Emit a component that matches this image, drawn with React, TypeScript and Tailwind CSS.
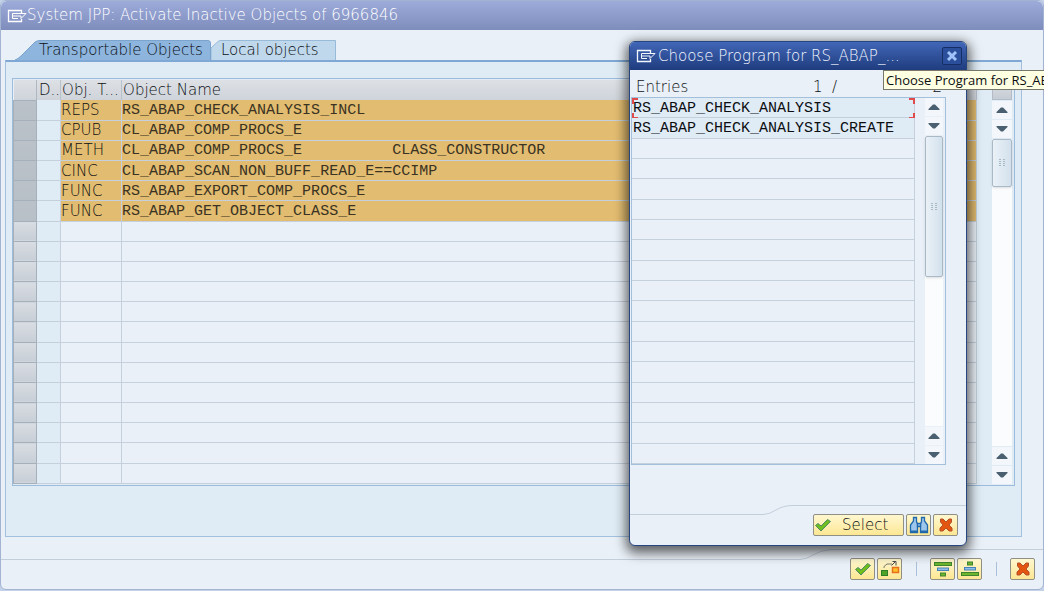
import { clsx } from "clsx";
import type { ReactNode } from "react";

const objects = [
  { type: "REPS", name: "RS_ABAP_CHECK_ANALYSIS_INCL" },
  { type: "CPUB", name: "CL_ABAP_COMP_PROCS_E" },
  { type: "METH", name: "CL_ABAP_COMP_PROCS_E          CLASS_CONSTRUCTOR" },
  { type: "CINC", name: "CL_ABAP_SCAN_NON_BUFF_READ_E==CCIMP" },
  { type: "FUNC", name: "RS_ABAP_EXPORT_COMP_PROCS_E" },
  { type: "FUNC", name: "RS_ABAP_GET_OBJECT_CLASS_E" },
];

const programs = ["RS_ABAP_CHECK_ANALYSIS", "RS_ABAP_CHECK_ANALYSIS_CREATE"];

const objectRows = Array.from({ length: 19 }, (_, i) => objects[i]);
const programRows = Array.from({ length: 18 }, (_, i) => programs[i]);

function WindowIcon() {
  return (
    <svg width="20" height="14" viewBox="0 0 20 14" fill="none" stroke="currentColor" className="shrink-0">
      <path d="M14.500 4V1.500H1.500v11h13V10" strokeWidth="1.300" />
      <path d="M10 4.500H5.500v5H11M6 7h5" />
      <path d="M10 4.500h9L14 9.500V7h-3" />
    </svg>
  );
}

function CheckIcon() {
  return (
    <svg width="18" height="16" viewBox="0 0 18 16" className="shrink-0">
      <path d="M1.500 8.500l2.500-2 3 2.500 6.500-6.500 3 2L7 14z" fill="#6fbe1e" stroke="#4d8a6a" strokeLinejoin="round" />
    </svg>
  );
}

function CrossIcon() {
  return (
    <svg width="16" height="16" viewBox="0 0 16 16">
      <path
        d="M2.500 2H5l3 3 3-3h2.500v3L11 8l3 3v3h-3l-3-3-3 3H2v-3l3-3-2.500-3z"
        fill="#e2560f"
        stroke="#b5502f"
        strokeLinejoin="round"
      />
    </svg>
  );
}

function BinocularsIcon() {
  return (
    <svg width="20" height="18" viewBox="0 0 20 18" fill="#9cc6ec" stroke="#2068ac" strokeWidth="1.300">
      <path d="M4.500 1.500h3v4L8.500 8v8.500h-7V9l3-4z" />
      <path d="M15.500 1.500h-3v4L11.500 8v8.500h7V9l-3-4z" />
      <path d="M8.500 7.500h3v3h-3z" />
      <path d="M2 15.500h6M12 15.500h6" strokeWidth="2" />
    </svg>
  );
}

function TransferIcon() {
  return (
    <svg width="20" height="18" viewBox="0 0 20 18" fill="none">
      <path d="M4 8V6.500L7 4h5" stroke="#777a70" />
      <path d="M11.500 5.500l4-4M12.500 1.500h3.500v4" stroke="#4a4d50" />
      <rect x="1.500" y="10.500" width="6" height="5" fill="#4fa428" stroke="#2e7d28" />
      <rect x="12.500" y="7.500" width="6" height="5" fill="#ffc02c" stroke="#e8701a" strokeWidth="1.500" />
    </svg>
  );
}

function ExpandIcon({ flipped = false }: { flipped?: boolean }) {
  return (
    <svg width="20" height="18" viewBox="0 0 20 18" className={clsx(flipped && "rotate-180")}>
      <rect x="1.500" y="2.500" width="17" height="3" fill="#6cb52d" stroke="#3f8430" />
      <rect x="4.500" y="8" width="11" height="2.500" fill="#8fc0ea" stroke="#4482b8" />
      <rect x="7.500" y="13" width="5" height="3" fill="#6cb52d" stroke="#3f8430" />
    </svg>
  );
}

function ToolButton({ label, children }: { label: string; children: ReactNode }) {
  return (
    <button
      aria-label={label}
      className="flex h-[22px] w-[25px] items-center justify-center rounded-xs border border-[#8f8f86] bg-linear-to-b from-[#fff7cf] to-[#fde793]"
    >
      {children}
    </button>
  );
}

function ScrollButton({ label, down = false }: { label: string; down?: boolean }) {
  return (
    <button aria-label={label} className="flex h-[18px] w-full shrink-0 items-center justify-center bg-[#f3f7fb]">
      <svg width="12" height="6" viewBox="0 0 12 6" className={clsx(down && "rotate-180")}>
        <path d="M0.500 6V5L5 0.500h2L11.500 5v1z" fill="#4a6070" />
      </svg>
    </button>
  );
}

function Scrollbar({ thumb }: { thumb: string }) {
  return (
    <div className="flex flex-1 flex-col gap-px">
      <ScrollButton label="Scroll up" />
      <ScrollButton label="Scroll down" down />
      <div className="flex-1 bg-[#fbfcfd]">
        <div
          className={clsx(
            "flex items-center justify-center rounded-xs border border-[#aab9c6] bg-linear-to-r from-[#eaf1f7] to-[#d3e1ed] shadow-sm",
            thumb,
          )}
        >
          <svg width="6" height="8" viewBox="0 0 6 8" fill="#a9b8c5">
            <path d="M0 0h2v1H0zM0 2h2v1H0zM0 4h2v1H0zM0 6h2v1H0zM4 0h2v1H4zM4 2h2v1H4zM4 4h2v1H4zM4 6h2v1H4z" />
          </svg>
        </div>
      </div>
      <ScrollButton label="Page up" />
      <ScrollButton label="Page down" down />
    </div>
  );
}

function Tabs() {
  return (
    <div role="tablist" className="flex h-5 pl-2.5">
      <button role="tab" aria-selected="true" className="relative w-[196px] pl-6 text-left leading-5 whitespace-nowrap">
        <svg viewBox="0 0 196 20" preserveAspectRatio="none" className="absolute inset-0 h-full w-full">
          <path d="M0 20Q3 19 6 16L20 2Q22 0.500 25 0.500H193Q195.500 0.500 195.500 3V20" fill="#8db5de" stroke="#7aa3cd" />
        </svg>
        <span className="relative">Transportable Objects</span>
      </button>
      <button role="tab" aria-selected="false" className="relative w-[125px] pl-2.5 text-left leading-5 whitespace-nowrap">
        <svg viewBox="0 0 125 20" preserveAspectRatio="none" className="absolute inset-0 h-full w-full">
          <path d="M0 20V8L7 1.500Q8 0.500 10 0.500H124.500V20" fill="#c0d8ec" stroke="#98bad9" />
        </svg>
        <span className="relative">Local objects</span>
      </button>
    </div>
  );
}

function ObjectTable() {
  return (
    <table className="flex-1 table-fixed border-collapse bg-[#e9f0f7] text-left">
      <thead>
        <tr className="h-5 bg-linear-to-b from-[#dde0e4] to-[#cfd4db]">
          <th className="w-[23px] border-r border-[#aeb8c2] p-0" aria-label="Select row" />
          <th className="w-6 border-r border-[#b9c1ca] p-0 pl-0.5 font-extralight leading-4">D..</th>
          <th className="w-[61px] border-r border-[#b9c1ca] p-0 pl-px font-extralight leading-4 whitespace-nowrap">Obj. T...</th>
          <th className="border-r border-[#b9c1ca] p-0 pl-px font-extralight leading-4">Object Name</th>
        </tr>
      </thead>
      <tbody>
        {objectRows.map((row, i) => (
          <tr key={i} className={clsx("h-5 border-b border-[#c5d0dc]", row && "bg-[#e2bc70]")}>
            <td
              className={clsx(
                "border border-[#a6b0ba] p-0",
                row ? "bg-linear-to-b from-[#bac1c9] to-[#b7bfc7]" : "bg-linear-to-b from-[#d8dde3] to-[#c8ced6]",
              )}
            />
            <td className="border-r border-[#c5d0dc] bg-[#dfecf5] p-0" />
            <td className="border-r border-[#c5d0dc] p-0 leading-4">{row?.type}</td>
            <td className="border-r border-[#c5d0dc] p-0 pt-0.5 align-middle font-['Liberation_Mono',monospace] leading-4 font-normal whitespace-pre text-[#3a3323]">
              {row?.name}
            </td>
          </tr>
        ))}
      </tbody>
    </table>
  );
}

function ProgramDialog() {
  return (
    <div
      role="dialog"
      aria-label="Choose Program for RS_ABAP_..."
      className="absolute top-[41px] right-[77px] flex w-[338px] flex-col rounded-md border border-[#27457f] bg-[#e9f0f7] shadow-[0_4px_12px_3px_rgba(0,0,0,0.6)]"
    >
      <div className="flex h-7 items-center gap-0.5 rounded-t-[5px] bg-linear-to-b from-[#4267b8] to-[#1f3c7e] pr-1 pl-1.5 text-[#f2f6ff]">
        <WindowIcon />
        <span className="flex-1 whitespace-nowrap">Choose Program for RS_ABAP_...</span>
        <button aria-label="Close" className="flex h-[18px] w-5 items-center justify-center rounded-xs border border-[#172d66] bg-[#2c4f9c]">
          <svg width="12" height="10" viewBox="0 0 12 10" stroke="#9fc2fa" strokeWidth="3">
            <path d="M2 1l8 8M10 1L2 9" />
          </svg>
        </button>
      </div>
      <div className="flex h-[27px] items-end pr-6 pl-1.5 leading-5">
        <span className="w-[177px]">Entries</span>
        <span className="flex-1 whitespace-pre">1  /</span>
        <span>2</span>
      </div>
      <div className="mr-5 ml-px flex border border-[#a3bfda]">
        <ul className="grid h-[366px] w-[283px] auto-rows-fr">
          {programRows.map((name, i) => (
            <li
              key={i}
              className={clsx(
                "relative border-r border-b border-[#c5d0dc] pl-px font-['Liberation_Mono',monospace] font-normal",
                name && "bg-[#dfebf5]",
              )}
            >
              {name && <button className="block w-full pt-0.5 text-left leading-[18px]">{name}</button>}
              {i === 0 && (
                <>
                  <i className="absolute top-0 left-0 h-1.5 w-1.5 border-t-2 border-l-2 border-[#e04a4a]" />
                  <i className="absolute top-0 -right-px h-1.5 w-1.5 border-t-2 border-r-2 border-[#e04a4a]" />
                  <i className="absolute -bottom-0.5 left-0 h-1.5 w-1.5 border-b-2 border-l-2 border-[#e04a4a]" />
                  <i className="absolute -right-px -bottom-0.5 h-1.5 w-1.5 border-r-2 border-b-2 border-[#e04a4a]" />
                </>
              )}
            </li>
          ))}
        </ul>
        <div className="flex flex-1 pr-0.5 pl-2.5">
          <Scrollbar thumb="h-[141px]" />
        </div>
      </div>
      <div className="relative mt-10 flex h-10 items-center justify-end gap-0.5 pr-2">
        <svg viewBox="0 0 336 10" preserveAspectRatio="none" className="absolute top-0 left-0 h-2.5 w-full" fill="none" stroke="#c3cedb">
          <path d="M0 9.500H133Q139 9.500 146 5T163 0.500H336" />
        </svg>
        <button className="flex h-[22px] w-[91px] items-center gap-2.5 rounded-xs border border-[#8f8f86] bg-linear-to-b from-[#fff7cf] to-[#fde793]">
          <CheckIcon />
          Select
        </button>
        <ToolButton label="Find">
          <BinocularsIcon />
        </ToolButton>
        <ToolButton label="Cancel">
          <CrossIcon />
        </ToolButton>
      </div>
    </div>
  );
}

export default function App() {
  return (
    <div className="relative flex min-h-screen flex-col overflow-hidden bg-[#c3d2e8] pb-px font-['DejaVu_Sans',sans-serif] text-[15px] font-extralight text-[#0c0e12]">
      <div className="flex flex-1 flex-col rounded-md border border-[#a3b4d3] bg-[#e9f0f7]">
        <header className="flex h-[29px] items-center rounded-t-md bg-linear-to-b from-[#9dabdb] to-[#7f8dbd] pl-1.5 text-white">
          <WindowIcon />
          <h1>System JPP: Activate Inactive Objects of 6966846</h1>
        </header>

        <main className="flex flex-1 flex-col pt-2.5 pr-[21px] pl-1">
          <Tabs />
          <section className="flex flex-1 flex-col border border-t-2 border-[#a3c1df] border-t-[#7fa8d4] bg-[#dfecf5] px-1.5 pt-4 pb-[50px]">
            <div className="flex flex-1 border border-[#9dbbdb] py-px pr-0.5">
              <ObjectTable />
              <div className="ml-[15px] flex w-5 flex-col">
                <div className="mb-px h-5 border border-[#b3bcc6] bg-linear-to-b from-[#dde0e4] to-[#c6ccd4]" />
                <Scrollbar thumb="h-12" />
              </div>
            </div>
          </section>
        </main>

        <footer className="relative mt-3 flex h-10 items-center justify-end gap-0.5 pr-2">
          <svg viewBox="0 0 1042 12" preserveAspectRatio="none" className="absolute top-0 left-0 h-3 w-full" fill="none" stroke="#c3cedb">
            <path d="M0 10.500H799Q805 10.500 812 6T829 0.500H1042" />
          </svg>
          <ToolButton label="Continue">
            <CheckIcon />
          </ToolButton>
          <ToolButton label="Object directory">
            <TransferIcon />
          </ToolButton>
          <span className="mr-[11px] ml-3 h-3.5 border-l border-[#a9c0d8]" />
          <ToolButton label="Select all">
            <ExpandIcon />
          </ToolButton>
          <ToolButton label="Deselect all">
            <ExpandIcon flipped />
          </ToolButton>
          <span className="mr-[11px] ml-3 h-3.5 border-l border-[#a9c0d8]" />
          <ToolButton label="Cancel">
            <CrossIcon />
          </ToolButton>
        </footer>
      </div>

      <ProgramDialog />
      <div
        role="tooltip"
        className="absolute top-[70px] -right-5 w-[181px] overflow-hidden border border-[#77776c] bg-[#ffffe1] px-0.5 font-['Open_Sans',sans-serif] text-[13px] leading-[18px] font-normal whitespace-nowrap"
      >
        Choose Program for RS_ABAP
      </div>
    </div>
  );
}
